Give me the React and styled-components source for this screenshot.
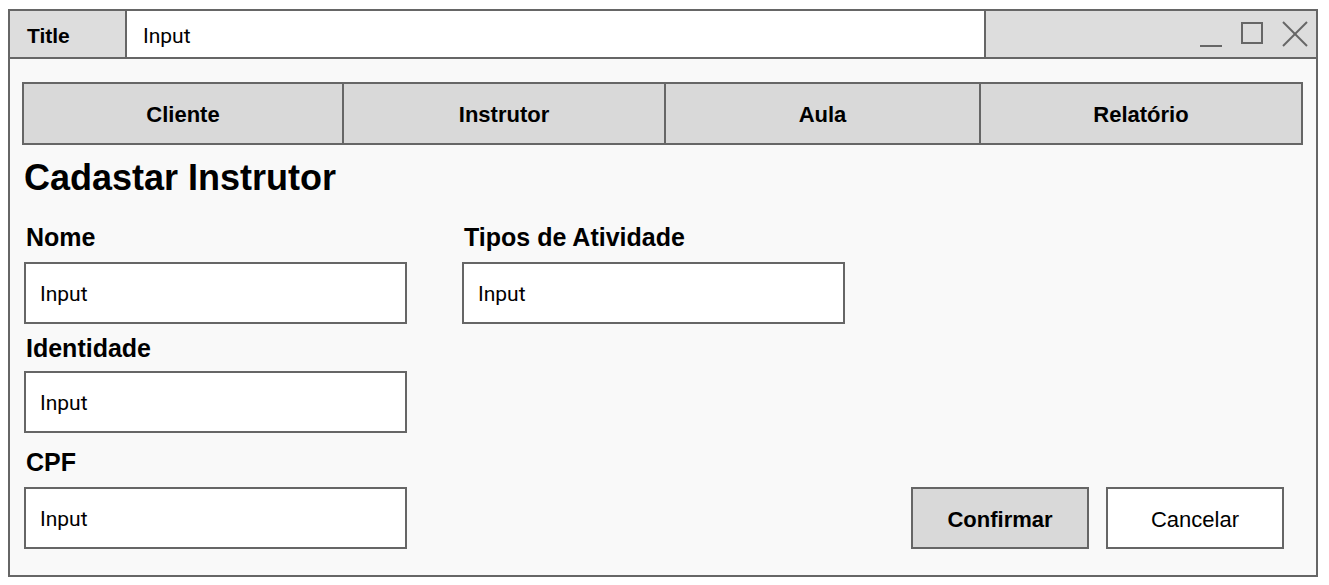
import React from "react";
import styled, { createGlobalStyle } from "styled-components";

const GlobalStyle = createGlobalStyle`
  body {
    margin: 0;
    background: #ffffff;
    font-family: "Liberation Sans", Arial, sans-serif;
    color: #000;
  }
`;

const Page = styled.div`
  padding: 9px 0 0 8px;
`;

const Window = styled.div`
  width: 1310px;
  height: 568px;
  box-sizing: border-box;
  border: 2px solid #666666;
  background: #f9f9f9;
  display: flex;
  flex-direction: column;
`;

const TitleBar = styled.div`
  display: flex;
  height: 48px;
  box-sizing: border-box;
  border-bottom: 2px solid #666666;
`;

const TitleCell = styled.div`
  width: 117px;
  background: #dddddd;
  border-right: 2px solid #666666;
  display: flex;
  align-items: center;
  padding: 3px 0 0 17px;
  box-sizing: border-box;
  font-weight: bold;
  font-size: 21px;
`;

const TitleInput = styled.div`
  width: 859px;
  background: #ffffff;
  border-right: 2px solid #666666;
  display: flex;
  align-items: center;
  padding: 3px 0 0 16px;
  box-sizing: border-box;
  font-family: Roboto, sans-serif;
  font-size: 21px;
`;

const Controls = styled.div`
  flex: 1;
  background: #dddddd;
  display: flex;
  align-items: center;
  justify-content: flex-end;
  gap: 19px;
  padding-right: 8px;

  svg {
    display: block;
  }
`;

const Body = styled.div`
  flex: 1;
  padding: 23px 13px 0 12px;
  display: flex;
  flex-direction: column;
`;

const Tabs = styled.div`
  display: grid;
  grid-template-columns: 318px 322px 315px 1fr;
  height: 63px;
  box-sizing: border-box;
  border: 2px solid #666666;
  background: #d9d9d9;
`;

const Tab = styled.div`
  display: flex;
  align-items: center;
  justify-content: center;
  padding-top: 3px;
  font-weight: bold;
  font-size: 22px;
  border-left: ${(p) => (p.first ? "none" : "2px solid #666666")};
`;

const Heading = styled.h1`
  margin: 12px 0 0 2px;
  font-size: 36px;
  line-height: 42px;
  font-weight: bold;
`;

const Form = styled.div`
  display: flex;
  padding: 24px 19px 0 2px;
`;

const Column = styled.div`
  width: 383px;
  margin-right: ${(p) => p.gap || 0}px;
  display: flex;
  flex-direction: column;
`;

const Field = styled.div`
  display: flex;
  flex-direction: column;
  margin-top: ${(p) => p.top || 0}px;
`;

const Label = styled.label`
  font-weight: bold;
  font-size: 25px;
  line-height: 28px;
  padding-left: 2px;
  margin-bottom: ${(p) => p.space || 11}px;
`;

const Input = styled.div`
  height: 62px;
  box-sizing: border-box;
  border: 2px solid #666666;
  background: #ffffff;
  display: flex;
  align-items: center;
  padding: 2px 0 0 14px;
  font-family: Roboto, sans-serif;
  font-size: 21px;
`;

const Actions = styled.div`
  margin-left: auto;
  align-self: flex-end;
  display: flex;
  gap: 17px;
`;

const Button = styled.button`
  width: 178px;
  height: 62px;
  box-sizing: border-box;
  border: 2px solid #666666;
  background: ${(p) => (p.primary ? "#d9d9d9" : "#ffffff")};
  font-family: "Liberation Sans", Arial, sans-serif;
  font-weight: ${(p) => (p.primary ? "bold" : "normal")};
  font-size: 22px;
  color: #000;
  padding: 3px 0 0;
  cursor: pointer;
`;

const stroke = "#666666";

const Minimize = () => (
  <svg width="22" height="26" viewBox="0 0 22 26">
    <line x1="0" y1="25" x2="22" y2="25" stroke={stroke} strokeWidth="2" />
  </svg>
);

const Maximize = () => (
  <svg width="22" height="26" viewBox="0 0 22 26">
    <rect x="1" y="2" width="20" height="20" fill="none" stroke={stroke} strokeWidth="2" />
  </svg>
);

const Close = () => (
  <svg width="26" height="26" viewBox="0 0 26 26">
    <line x1="1" y1="1" x2="25" y2="25" stroke={stroke} strokeWidth="2" />
    <line x1="25" y1="1" x2="1" y2="25" stroke={stroke} strokeWidth="2" />
  </svg>
);

const tabs = ["Cliente", "Instrutor", "Aula", "Relatório"];

export default function App() {
  return (
    <Page>
      <GlobalStyle />
      <Window>
        <TitleBar>
          <TitleCell>Title</TitleCell>
          <TitleInput>Input</TitleInput>
          <Controls>
            <Minimize />
            <Maximize />
            <Close />
          </Controls>
        </TitleBar>
        <Body>
          <Tabs>
            {tabs.map((t, i) => (
              <Tab key={t} first={i === 0}>{t}</Tab>
            ))}
          </Tabs>
          <Heading>Cadastar Instrutor</Heading>
          <Form>
            <Column gap={55}>
              <Field>
                <Label space={11}>Nome</Label>
                <Input>Input</Input>
              </Field>
              <Field top={10}>
                <Label space={9}>Identidade</Label>
                <Input>Input</Input>
              </Field>
              <Field top={15}>
                <Label space={11}>CPF</Label>
                <Input>Input</Input>
              </Field>
            </Column>
            <Column>
              <Field>
                <Label space={11}>Tipos de Atividade</Label>
                <Input>Input</Input>
              </Field>
            </Column>
            <Actions>
              <Button primary>Confirmar</Button>
              <Button>Cancelar</Button>
            </Actions>
          </Form>
        </Body>
      </Window>
    </Page>
  );
}
